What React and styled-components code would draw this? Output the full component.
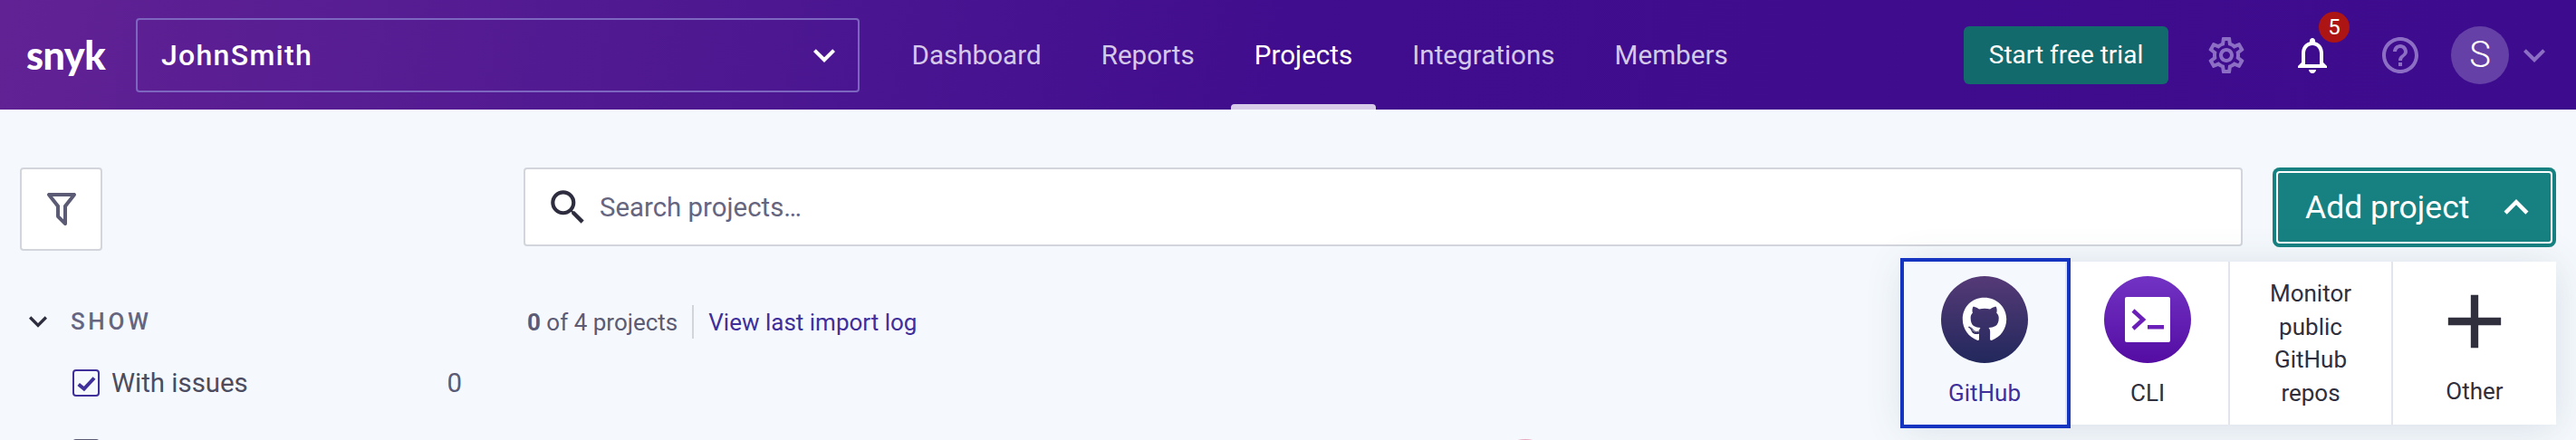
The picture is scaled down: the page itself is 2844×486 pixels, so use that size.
import React from 'react';
import styled, { createGlobalStyle } from 'styled-components';
import { MdKeyboardArrowDown, MdKeyboardArrowUp, MdOutlineSettings, MdOutlineNotifications, MdHelpOutline } from 'react-icons/md';
import { FaGithub } from 'react-icons/fa';

const GlobalStyle = createGlobalStyle`
  html, body {
    margin: 0;
    height: 486px;
    overflow: hidden;
    background: #f5f9fd;
    font-family: Roboto, "Liberation Sans", sans-serif;
  }
  #root {
    height: 486px;
    overflow: hidden;
  }
  * { box-sizing: border-box; }
`;

const Header = styled.header`
  display: flex;
  align-items: center;
  height: 121px;
  padding-left: 29px;
  padding-right: 22px;
  background: linear-gradient(100deg, #612294 0%, #4c1791 30%, #400d8e 50%, #3d0b8d 100%);
`;

const Logo = styled.div`
  width: 88px;
  margin-right: 33px;
  font-family: Lato, sans-serif;
  font-weight: 900;
  font-size: 43px;
  letter-spacing: -0.5px;
  line-height: 44px;
  color: #fff;
`;

const OrgSelect = styled.div`
  display: flex;
  align-items: center;
  justify-content: space-between;
  width: 799px;
  height: 82px;
  padding: 0 25px 0 26px;
  border: 2px solid #7c66c0;
  border-radius: 4px;
  color: #fff;
  font-size: 32px;
  font-weight: 500;
  letter-spacing: 1.3px;
`;

const Nav = styled.nav`
  display: flex;
  align-self: stretch;
  margin-left: 24.5px;
`;

const NavLink = styled.a`
  position: relative;
  display: flex;
  align-items: center;
  padding: 0 33px;
  font-size: 29.6px;
  color: ${props => (props.$active ? '#fff' : '#d5c9ea')};
  &::after {
    content: ${props => (props.$active ? '""' : 'none')};
    position: absolute;
    left: 7px;
    right: 7px;
    bottom: 0;
    height: 6px;
    border-radius: 4px 4px 0 0;
    background: #d8cbe9;
  }
`;

const HeaderRight = styled.div`
  display: flex;
  align-items: center;
  margin-left: auto;
`;

const TrialButton = styled.button`
  width: 226px;
  height: 64px;
  margin-right: 40px;
  border: 0;
  border-radius: 6px;
  background: #136a6c;
  color: #fff;
  font: 400 28px Roboto, sans-serif;
`;

const IconSlot = styled.div`
  position: relative;
  display: flex;
  width: 48px;
  height: 48px;
  margin-right: ${props => props.$gap}px;
  color: ${props => (props.$bright ? '#fff' : '#8c6fc4')};
`;

const Badge = styled.span`
  position: absolute;
  top: -24px;
  left: 31px;
  display: flex;
  align-items: center;
  justify-content: center;
  width: 34px;
  height: 34px;
  border-radius: 50%;
  background: #ad1414;
  color: #fff;
  font-size: 24px;
`;

const Avatar = styled.div`
  display: flex;
  align-items: center;
  justify-content: center;
  width: 64px;
  height: 64px;
  margin-right: 4px;
  border-radius: 50%;
  background: #6540a6;
  color: #fff;
  font-size: 40px;
  font-weight: 300;
`;

const UserChevron = styled(MdKeyboardArrowDown)`
  color: #8c6fc4;
`;

const Body = styled.div`
  display: grid;
  grid-template-columns: 556px 1fr;
  padding: 64px 22px 0;
`;

const Sidebar = styled.aside`
  display: flex;
  flex-direction: column;
`;

const FilterButton = styled.button`
  display: flex;
  align-items: center;
  justify-content: center;
  width: 91px;
  height: 92px;
  padding: 0;
  border: 2px solid #d3d5dc;
  border-radius: 4px;
  background: #fff;
  color: #5b5b75;
`;

const SectionTitle = styled.div`
  display: flex;
  align-items: center;
  height: 36px;
  margin-top: 60px;
  font-size: 26px;
  font-weight: 500;
  letter-spacing: 3.6px;
  color: #65657f;
  svg { margin: 0 16px 0 0; color: #2d2d3f; }
`;

const FilterRow = styled.label`
  display: flex;
  align-items: center;
  flex: none;
  width: 430px;
  height: 36px;
  margin-top: ${props => props.$top}px;
  margin-left: 58px;
  font-size: 29.4px;
  color: #4c4c60;
`;

const Checkbox = styled.span`
  display: flex;
  align-items: center;
  justify-content: center;
  flex: none;
  width: 30px;
  height: 30px;
  margin-right: 13px;
  border: 2px solid ${props => (props.$checked ? '#3f2f9b' : '#5b5b75')};
  border-radius: 4px;
  color: #3f2f9b;
`;

const Count = styled.span`
  margin-left: auto;
  color: #5b5b75;
`;

const Main = styled.main`
  display: flex;
  flex-direction: column;
`;

const Toolbar = styled.div`
  display: flex;
  gap: 33px;
`;

const SearchBox = styled.div`
  display: flex;
  align-items: center;
  flex: 1;
  height: 87px;
  padding-left: 22px;
  border: 2px solid #d3d5dc;
  border-radius: 4px;
  background: #fff;
  color: #65657f;
  font-size: 29.4px;
  svg { color: #2d2d3f; margin-right: 10px; }
`;

const AddWrap = styled.div`
  position: relative;
  width: 313px;
`;

const AddButton = styled.button`
  display: flex;
  align-items: center;
  width: 313px;
  height: 88px;
  padding: 0 0 0 36px;
  border: 0;
  border-radius: 8px;
  background: #178080;
  box-shadow: inset 0 0 0 4px #178080, inset 0 0 0 6px #fff;
  color: #fff;
  font: 400 35.5px Roboto, sans-serif;
  svg { margin-left: 25px; }
`;

const Menu = styled.div`
  position: absolute;
  top: 104px;
  right: 0;
  display: flex;
  background: #fff;
  box-shadow: 0 4px 40px rgba(70, 85, 110, 0.16);
`;

const MenuItem = styled.div`
  position: relative;
  z-index: ${props => (props.$selected ? 1 : 0)};
  display: flex;
  flex-direction: column;
  align-items: center;
  width: 180px;
  height: 180px;
  padding-top: ${props => props.$top || 16}px;
  border-right: ${props => (props.$last ? '0' : '2px solid #e2e6ec')};
  background: ${props => (props.$selected ? '#f5f9fd' : '#fff')};
  outline: ${props => (props.$selected ? '4px solid #1534c0' : '0')};
  color: ${props => (props.$selected ? '#3f2f9b' : '#2f2f3d')};
  font-size: 26px;
  line-height: 36.5px;
  text-align: center;
`;

const Disc = styled.div`
  display: flex;
  align-items: center;
  justify-content: center;
  width: 96px;
  height: 96px;
  margin-bottom: 15px;
  border-radius: 50%;
  background: linear-gradient(${props => props.$from}, ${props => props.$to});
  color: #fff;
`;

const PlusSlot = styled.div`
  display: flex;
  height: 100px;
  margin-bottom: 9px;
`;

const Summary = styled.div`
  display: flex;
  align-items: center;
  height: 37px;
  margin-top: 64px;
  padding-left: 4px;
  font-size: 26px;
  color: #5b5b75;
  b { font-weight: 700; }
`;

const Divider = styled.span`
  width: 2px;
  height: 37px;
  margin: 0 16px;
  background: #d3d5dc;
`;

const LogLink = styled.a`
  color: #3f2f9b;
`;

const EmptyArt = styled.div`
  flex: none;
  width: 74px;
  height: 74px;
  margin-top: 111px;
  margin-left: 1069px;
  border-radius: 50%;
  background: #eba5bb;
`;

const Filter = () => (
  <svg width="48" height="48" viewBox="0 0 24 24" fill="currentColor">
    <path d="M15,19.88C15.04,20.18 14.94,20.5 14.71,20.71C14.32,21.1 13.69,21.1 13.3,20.71L9.29,16.7C9.06,16.47 8.96,16.16 9,15.87V10.75L4.21,4.62C3.87,4.19 3.95,3.56 4.38,3.22C4.57,3.08 4.78,3 5,3V3H19V3C19.22,3 19.43,3.08 19.62,3.22C20.05,3.56 20.13,4.19 19.79,4.62L15,10.75V19.88M7.04,5L11,10.06V15.58L13,17.58V10.05L16.96,5H7.04Z" />
  </svg>
);

const Magnify = () => (
  <svg width="50" height="50" viewBox="0 0 24 24" fill="currentColor">
    <path d="M9.5,3A6.5,6.5 0 0,1 16,9.5C16,11.11 15.41,12.59 14.44,13.73L14.71,14H15.5L20.5,19L19,20.5L14,15.5V14.71L13.73,14.44C12.59,15.41 11.11,16 9.5,16A6.5,6.5 0 0,1 3,9.5A6.5,6.5 0 0,1 9.5,3M9.5,5C7,5 5,7 5,9.5C5,12 7,14 9.5,14C12,14 14,12 14,9.5C14,7 12,5 9.5,5Z" />
  </svg>
);

const Plus = () => (
  <svg width="100" height="100" viewBox="0 0 24 24" fill="currentColor">
    <path d="M19,13H13V19H11V13H5V11H11V5H13V11H19V13Z" />
  </svg>
);

const Terminal = () => (
  <svg width="50" height="50" viewBox="0 0 50 50">
    <rect width="50" height="50" rx="2" fill="#fff" />
    <path d="M9 15L20 25L9 35" fill="none" stroke="#6a1fb8" strokeWidth="4.5" />
    <rect x="25" y="31" width="18" height="4.5" fill="#6a1fb8" />
  </svg>
);

const Tick = () => (
  <svg width="26" height="26" viewBox="0 0 26 26">
    <path d="M4.7 14.5L10.8 19.5L22 7.5" fill="none" stroke="currentColor" strokeWidth="4" />
  </svg>
);

const App = () => (
  <>
    <GlobalStyle />
    <Header>
      <Logo>snyk</Logo>
      <OrgSelect>
        JohnSmith
        <MdKeyboardArrowDown size={48} style={{ marginRight: -12 }} />
      </OrgSelect>
      <Nav>
        <NavLink>Dashboard</NavLink>
        <NavLink>Reports</NavLink>
        <NavLink $active>Projects</NavLink>
        <NavLink>Integrations</NavLink>
        <NavLink>Members</NavLink>
      </Nav>
      <HeaderRight>
        <TrialButton>Start free trial</TrialButton>
        <IconSlot $gap={47}><MdOutlineSettings size={48} /></IconSlot>
        <IconSlot $gap={49} $bright>
          <MdOutlineNotifications size={48} />
          <Badge>5</Badge>
        </IconSlot>
        <IconSlot $gap={32}><MdHelpOutline size={48} /></IconSlot>
        <Avatar>S</Avatar>
        <UserChevron size={48} />
      </HeaderRight>
    </Header>
    <Body>
      <Sidebar>
        <FilterButton><Filter /></FilterButton>
        <SectionTitle>
          <MdKeyboardArrowDown size={40} />
          SHOW
        </SectionTitle>
        <FilterRow $top={32}>
          <Checkbox $checked><Tick /></Checkbox>
          With issues
          <Count>0</Count>
        </FilterRow>
        <FilterRow $top={41}>
          <Checkbox />
        </FilterRow>
      </Sidebar>
      <Main>
        <Toolbar>
          <SearchBox>
            <Magnify />
            Search projects…
          </SearchBox>
          <AddWrap>
            <AddButton>
              Add project
              <MdKeyboardArrowUp size={54} />
            </AddButton>
            <Menu>
              <MenuItem $selected>
                <Disc $from="#553a77" $to="#22285c"><FaGithub size={50} /></Disc>
                GitHub
              </MenuItem>
              <MenuItem>
                <Disc $from="#7233c4" $to="#540ca2"><Terminal /></Disc>
                CLI
              </MenuItem>
              <MenuItem $top={17}>
                Monitor<br />public<br />GitHub<br />repos
              </MenuItem>
              <MenuItem $last>
                <PlusSlot><Plus /></PlusSlot>
                Other
              </MenuItem>
            </Menu>
          </AddWrap>
        </Toolbar>
        <Summary>
          <b>0</b>&nbsp;of 4 projects
          <Divider />
          <LogLink>View last import log</LogLink>
        </Summary>
        <EmptyArt />
      </Main>
    </Body>
  </>
);

export default App;
